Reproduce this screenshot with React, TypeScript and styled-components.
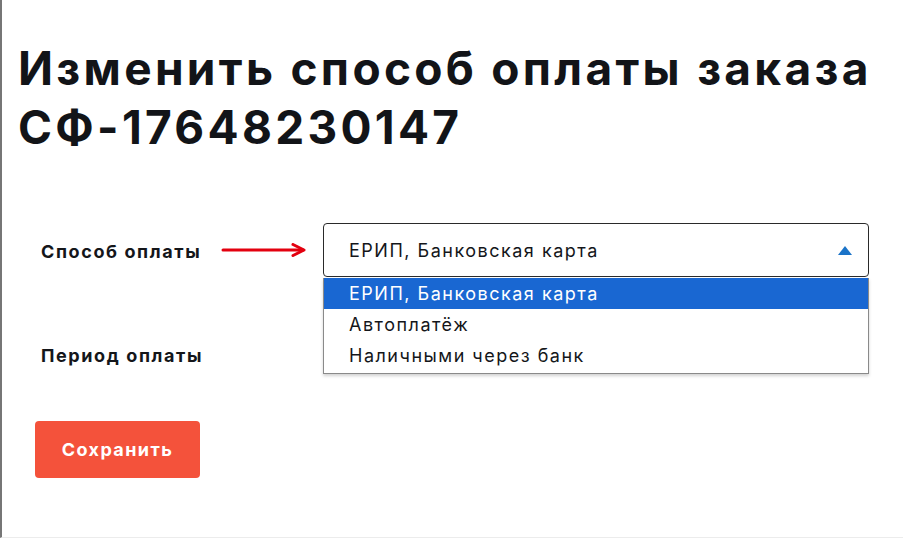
import React from "react";
import styled, { createGlobalStyle } from "styled-components";

const Global = createGlobalStyle`
  html, body { margin: 0; padding: 0; background: #fff; }
  body { font-family: "Inter", "Open Sans", sans-serif; color: #14161a; }
  * { box-sizing: border-box; }
`;

const Page = styled.div`
  width: 903px;
  height: 538px;
  border-left: 2px solid #767676;
  border-bottom: 1px solid #ececec;
  padding: 39px 0 0 16px;
  overflow: hidden;
`;

const Title = styled.h1`
  margin: 0;
  font-family: "Inter", sans-serif;
  font-weight: 700;
  font-size: 46px;
  line-height: 59px;
  letter-spacing: 3.3px;
  color: #121418;
`;

const Form = styled.div`
  margin-top: 66px;
  padding-left: 23px;
  display: flex;
  flex-direction: column;
  gap: 50px;
`;

const Row = styled.div`
  display: grid;
  grid-template-columns: 180px 102px 546px;
  align-items: center;
  height: 54px;
`;

const Label = styled.div`
  font-weight: 700;
  font-size: 18px;
  letter-spacing: 1.6px;
  color: #14161a;
  padding-top: 2px;
`;

const Arrow = styled.svg`
  width: 86px;
  height: 14px;
  display: block;
`;

const SelectWrap = styled.div`
  position: relative;
  height: 54px;
`;

const SelectBox = styled.div`
  height: 54px;
  border: 1px solid #2a2a2a;
  border-radius: 4px;
  display: flex;
  align-items: center;
  justify-content: space-between;
  padding: 0 16px 0 25px;
  font-size: 18px;
  letter-spacing: 1.5px;
  color: #14161a;
`;

const Caret = styled.svg`
  width: 14px;
  height: 9px;
  display: block;
`;

const Menu = styled.ul`
  position: absolute;
  left: 0;
  right: 0;
  top: 55px;
  margin: 0;
  padding: 0 0 2px;
  list-style: none;
  background: #fff;
  border: 1px solid #8a8a8a;
  border-top: none;
  box-shadow: 0 2px 3px rgba(0, 0, 0, 0.18);
`;

const Option = styled.li<{ $active?: boolean }>`
  height: 31px;
  display: flex;
  align-items: center;
  padding-left: 25px;
  font-size: 18px;
  letter-spacing: 1.5px;
  background: ${(p) => (p.$active ? "#1967d2" : "#fff")};
  color: ${(p) => (p.$active ? "#fff" : "#14161a")};
`;

const Button = styled.button`
  align-self: flex-start;
  margin-top: -10px;
  margin-left: -6px;
  width: 165px;
  height: 57px;
  border: none;
  border-radius: 4px;
  background: #f4523b;
  color: #fff;
  font-family: "Inter", sans-serif;
  font-weight: 700;
  font-size: 18px;
  letter-spacing: 1.4px;
  cursor: pointer;
`;

export default function App() {
  return (
    <>
      <Global />
      <Page>
        <Title>
          Изменить способ оплаты заказа
          <br />
          СФ-17648230147
        </Title>
        <Form>
          <Row>
            <Label>Способ оплаты</Label>
            <Arrow viewBox="0 0 86 14">
              <path d="M2 7 H82" stroke="#e3000f" strokeWidth="3" strokeLinecap="round" />
              <path d="M72 1.5 L83 7 L72 12.5" stroke="#e3000f" strokeWidth="3" fill="none" strokeLinecap="round" strokeLinejoin="round" />
            </Arrow>
            <SelectWrap>
              <SelectBox>
                <span>ЕРИП, Банковская карта</span>
                <Caret viewBox="0 0 14 9">
                  <path d="M0 9 L7 0 L14 9 Z" fill="#1a73c8" />
                </Caret>
              </SelectBox>
              <Menu>
                <Option $active>ЕРИП, Банковская карта</Option>
                <Option>Автоплатёж</Option>
                <Option>Наличными через банк</Option>
              </Menu>
            </SelectWrap>
          </Row>
          <Row>
            <Label>Период оплаты</Label>
          </Row>
          <Button>Сохранить</Button>
        </Form>
      </Page>
    </>
  );
}
